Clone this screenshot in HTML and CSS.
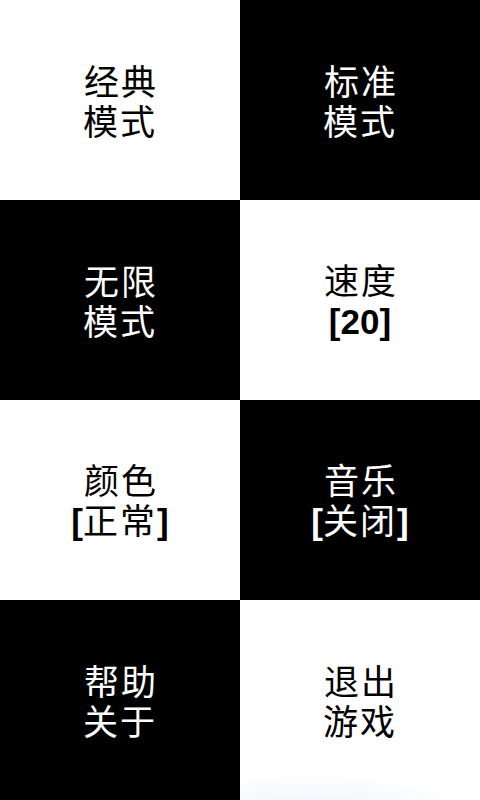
FILE: index.html
```html
<!DOCTYPE html>
<html lang="zh">
<head>
<meta charset="utf-8">
<link rel="stylesheet" href="styles.css">
</head>
<body>
<main class="board">
  <div class="cell white"><p>经典<br>模式</p></div>
  <div class="cell black"><p>标准<br>模式</p></div>
  <div class="cell black"><p>无限<br>模式</p></div>
  <div class="cell white"><p>速度<br><span class="lat">[20]</span></p></div>
  <div class="cell white"><p>颜色<br><span class="lat">[</span>正常<span class="lat">]</span></p></div>
  <div class="cell black"><p>音乐<br><span class="lat">[</span>关闭<span class="lat">]</span></p></div>
  <div class="cell black"><p>帮助<br>关于</p></div>
  <div class="cell white last"><p>退出<br>游戏</p></div>
</main>
</body>
</html>
```
FILE: styles.css
```css
html, body {
  margin: 0;
  padding: 0;
  width: 480px;
  height: 800px;
  overflow: hidden;
  background: #fff;
}
.board {
  display: grid;
  grid-template-columns: 240px 240px;
  grid-template-rows: repeat(4, 200px);
  font-family: "Noto Sans CJK SC", "Noto Sans", sans-serif;
}
.cell {
  display: flex;
  align-items: center;
  justify-content: center;
  text-align: center;
}
.cell p {
  margin: 0;
  font-size: 35px;
  line-height: 40px;
  letter-spacing: 2px;
  text-indent: 2px;
  font-weight: 400;
}
.white { background: #fff; color: #000; }
.black { background: #000; color: #fff; }
.last {
  background: radial-gradient(ellipse 160px 40px at 30% 105%, #eef5fc 0%, #fff 100%);
}
.lat {
  font-family: "Liberation Sans", "Noto Sans", sans-serif;
  font-weight: 700;
  font-size: 35px;
  letter-spacing: 0;
}
```
